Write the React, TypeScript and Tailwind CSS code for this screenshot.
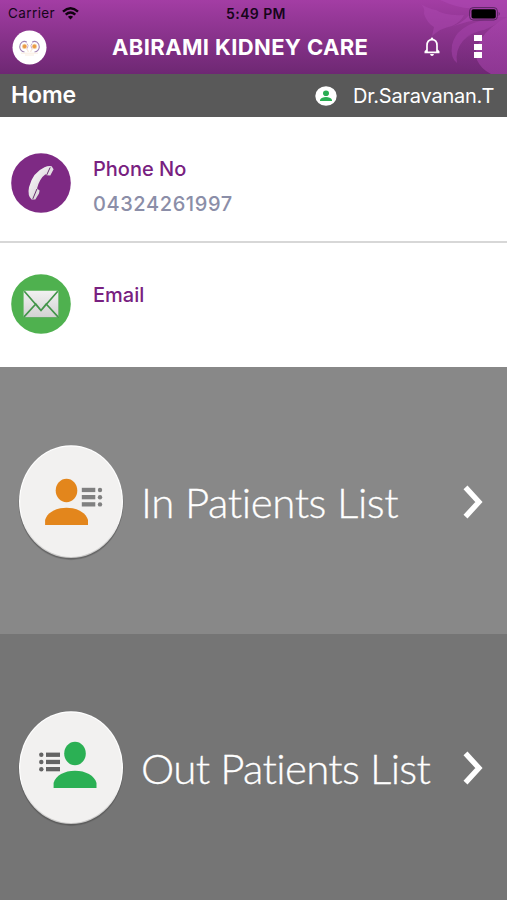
import React from "react";

function StatusBar() {
  return (
    <div className="grid h-[27px] grid-cols-3 items-center px-2 text-[#16051a]">
      <div className="flex items-center gap-[7px]">
        <span className="text-[13.5px] leading-none tracking-[0.4px]">Carrier</span>
        <svg width="17" height="13" viewBox="0 0 17 13" fill="none" stroke="#10020f" strokeWidth="2.4">
          <path d="M1 4.7Q8.5 -2 16 4.7" />
          <path d="M3.7 7.6Q8.5 3.5 13.3 7.6" />
          <path d="M5.9 9.8Q8.5 7.5 11.1 9.8L8.5 12.4Z" fill="#10020f" stroke="none" />
        </svg>
      </div>
      <div className="pl-[5px] text-center text-[14px] leading-none font-semibold tracking-[0.4px] whitespace-nowrap">5:49 PM</div>
      <div className="flex justify-end">
        <svg width="32" height="14" viewBox="0 0 32 14" className="mr-[-2px]">
          <rect x="0.6" y="0.6" width="27.8" height="12.4" rx="3.5" fill="none" stroke="#5b2563" strokeWidth="1" />
          <rect x="2.5" y="2.3" width="24.3" height="9.2" rx="1.8" fill="#000" />
          <path d="M29.7 4.7q2 2 0 4.2Z" fill="#5b2563" />
        </svg>
      </div>
    </div>
  );
}

function HeaderArt() {
  return (
    <svg className="absolute top-0 right-0" width="107" height="74" viewBox="400 0 107 74">
      <defs>
        <linearGradient id="plume" x1="0" y1="0" x2="0" y2="1">
          <stop offset="0" stopColor="#b34bb8" stopOpacity="0.5" />
          <stop offset="1" stopColor="#a341a8" stopOpacity="0.6" />
        </linearGradient>
        <linearGradient id="shade" x1="0" y1="0" x2="0" y2="1">
          <stop offset="0" stopColor="#8d3491" />
          <stop offset="1" stopColor="#6f2875" />
        </linearGradient>
      </defs>
      <path d="M421 4Q425 8 424 14Q427 23 434 27L432 36Q441 28 452 26Q461 22 464 15Q445 16 436 10Q427 8 421 4Z" fill="#ab47b0" opacity="0.5" />
      <path d="M440 0Q462 10 474 8Q468 20 452 27Q469 19 507 17V0Z" fill="#b04ab6" opacity="0.5" />
      <path d="M484 20Q456 26 452 45Q450 58 457 63Q455 50 463 41Q472 32 484 30Q494 26 507 17Q494 17 484 20Z" fill="#a744ad" opacity="0.5" />
      <path d="M507 17Q489 27 482 38Q473 50 477 60Q481 69 491 74H507Z" fill="url(#plume)" />
      <path d="M488 30Q475 37 473 51Q474 64 487 74Q464 70 458 63Q456 44 469 35Q478 30 488 30Z" fill="url(#shade)" opacity="0.4" />
    </svg>
  );
}

function KidneyLogo() {
  return (
    <svg width="35" height="35" viewBox="0 0 35 35">
      <circle cx="17.5" cy="17.5" r="17" fill="#fff" />
      <g fill="none" stroke="#a184b4" strokeWidth="1.1">
        <path d="M14.8 12.2Q12.5 10.6 10 12.1Q7.6 14 7.7 17Q8.2 21.4 12.5 22" />
        <path d="M20.2 12.2Q22.5 10.6 25 12.1Q27.4 14 27.3 17Q26.8 21.4 22.5 22" />
      </g>
      <circle cx="12.5" cy="16.4" r="2.6" fill="#f8d6ac" />
      <circle cx="22.5" cy="16.4" r="2.6" fill="#f8d6ac" />
      <circle cx="12.6" cy="16.4" r="1.8" fill="#e99c46" />
      <circle cx="22.4" cy="16.4" r="1.8" fill="#e99c46" />
      <path d="M15 13.5Q17 15 15.3 18.5M20 13.5Q18 15 19.7 18.5" fill="none" stroke="#c5a6c6" strokeWidth=".9" />
      <path d="M13.5 18.5Q16.2 19 16.3 22M21.5 18.5Q18.8 19 18.7 22" fill="none" stroke="#f6dcc6" strokeWidth=".8" />
      <path d="M9 23.2H26M13 25H22" stroke="#f9ecdf" strokeWidth="1" />
    </svg>
  );
}

function PhoneIcon() {
  return (
    <svg width="60" height="60" viewBox="0 0 60 60" className="shrink-0">
      <defs>
        <linearGradient id="handset" x1="0" y1="0" x2="1" y2="1">
          <stop stopColor="#fff" />
          <stop offset="1" stopColor="#c9c2ca" />
        </linearGradient>
      </defs>
      <circle cx="30" cy="30" r="29.8" fill="#7e2a84" />
      <path d="M33.5 14.2Q37.5 12.4 40.6 13.2L42.6 16.2L39.3 22.6L35.6 22.3L34.5 21.3Q28.5 25.5 26 35.6L28.6 37.4L28 40.6L24.3 46.5L20.6 46.6Q16.3 42.5 18 34.2Q21.5 19.5 33.5 14.2Z" fill="url(#handset)" />
      <path d="M39.2 14.4L35.6 22.2M25.9 36L21.8 45.9" stroke="#67316d" strokeWidth="1" />
    </svg>
  );
}

function MailIcon() {
  return (
    <svg width="60" height="60" viewBox="0 0 60 60" className="shrink-0">
      <defs>
        <linearGradient id="paper" x1="0" y1="0" x2="0" y2="1">
          <stop stopColor="#f1f1f1" />
          <stop offset="1" stopColor="#d2d2d2" />
        </linearGradient>
      </defs>
      <circle cx="30" cy="30" r="29.8" fill="#4fb14f" />
      <rect x="13" y="17.5" width="35" height="26.6" rx="1" fill="#338b38" opacity=".45" />
      <rect x="12.6" y="16.8" width="34.8" height="26.4" rx="1" fill="url(#paper)" />
      <path d="M13.3 17.2L24.8 30.5L30 36.5L35.2 30.5L46.8 17.2M13 42.8L24.8 30L30 36.5L35.2 30L47 42.8" fill="none" stroke="#43954a" strokeWidth="1.7" />
    </svg>
  );
}

function PatientBadge({ outgoing = false }: { outgoing?: boolean }) {
  const color = outgoing ? "#2bb054" : "#e3861c";
  const headX = outgoing ? 57 : 48.5;
  const lineX = outgoing ? 28 : 63.8;
  const dotX = outgoing ? 23.3 : 82;
  const lineY = outgoing ? 42.6 : 40.8;
  const gray = outgoing ? "#636363" : "#808080";
  const id = outgoing ? "out" : "in";
  const top = outgoing ? 0 : 3;
  return (
    <svg width="106" height="118" viewBox="0 0 106 118" className="shrink-0">
      <defs>
        <linearGradient id={id} x1="0" y1="0" x2="0" y2="1">
          <stop offset="0.6" stopColor="#fff" />
          <stop offset="1" stopColor="#c6c5c4" />
        </linearGradient>
      </defs>
      <ellipse cx="53" cy="59.3" rx="52.5" ry="56.9" fill="#505050" opacity=".25" />
      <ellipse cx="53" cy="58.7" rx="52.2" ry="56.7" fill="#4c4c4c" opacity=".45" />
      <ellipse cx="53" cy="57.7" rx="52" ry="56.4" fill={`url(#${id})`} />
      <ellipse cx="53" cy="57.7" rx="50.8" ry="55.3" fill="#f2f1f0" />
      <g transform={`translate(0 ${top})`}>
        <ellipse cx={headX} cy="43.5" rx="10.8" ry="11.7" fill={color} />
        <path transform={`translate(${headX - 48.5} 0)`} d="M27.1 78V73C29 65.5 38 60.8 48.5 60.8S68 65.5 70 73V78Z" fill={color} />
        {[0, 1, 2].map((row) => (
          <g key={row} fill={gray}>
            <rect x={lineX} y={lineY + row * 7.2} width={outgoing ? 14 : 13.5} height="4.3" />
            <circle cx={dotX} cy={lineY + 2.2 + row * 7.2} r="2.2" />
          </g>
        ))}
      </g>
    </svg>
  );
}

function ListRow({ outgoing = false }: { outgoing?: boolean }) {
  return (
    <button className={outgoing ? "flex h-[266px] w-full items-center bg-[#757575] pt-[4px] pl-[18px] text-left" : "flex h-[267px] w-full items-center bg-[#888] pt-[4px] pl-[18px] text-left"}>
      <PatientBadge outgoing={outgoing} />
      <span className={outgoing ? "ml-[17px] w-[320px] pb-[3px] font-['Lato',sans-serif] text-[42px] leading-none font-light tracking-[-0.65px] whitespace-nowrap text-white [-webkit-text-stroke:0.3px_white]" : "ml-[17px] w-[320px] pb-[1px] font-['Lato',sans-serif] text-[42px] leading-none font-light tracking-[-0.4px] whitespace-nowrap text-white [-webkit-text-stroke:0.3px_white]"}>
        {outgoing ? "Out Patients List" : "In Patients List"}
      </span>
      <svg width="23" height="36" viewBox="0 0 23 36" className="mb-[2px] shrink-0">
        <path d="M4.5 3.4L17.9 18L4.5 32.6" fill="none" stroke="#fff" strokeWidth="5.4" />
      </svg>
    </button>
  );
}

export default function App() {
  return (
    <main className="flex h-[900px] w-[507px] flex-col overflow-hidden bg-white font-['Inter','Liberation_Sans',sans-serif]">
      <header className="relative h-[74px] shrink-0 bg-linear-to-b from-[#a33da4] to-[#6e2873]">
        <HeaderArt />
        <div className="relative">
          <StatusBar />
          <div className="flex h-[40px] items-center pl-[12px]">
            <KidneyLogo />
            <h1 className="ml-[65px] w-[258px] text-[22px] leading-none font-bold tracking-[0.38px] whitespace-nowrap text-white">ABIRAMI KIDNEY CARE</h1>
            <svg width="18" height="21" viewBox="0 0 18 21" className="mt-[-2px] ml-[53px]" fill="none" stroke="#fff" strokeWidth="1.7">
              <path d="M4 15.6V9.5C4 5.8 5.8 3.6 9 3.6S14 5.8 14 9.5V15.6M1.5 16.4H16.5M2 16L4 13.8M16 16L14 13.8" />
              <circle cx="9" cy="2.6" r="1.2" fill="#fff" stroke="none" />
              <path d="M7 18H11Q10.5 20 9 20T7 18Z" fill="#fff" stroke="none" />
            </svg>
            <div className="mt-[-1px] ml-[33px] grid gap-[2.5px]">
              <i className="h-[6px] w-[8px] bg-white" />
              <i className="h-[6px] w-[8px] bg-white" />
              <i className="h-[6px] w-[8px] bg-white" />
            </div>
          </div>
        </div>
      </header>
      <section className="flex h-[43px] shrink-0 items-center bg-[#595959] pl-[11px] text-white">
        <h2 className="w-[304px] text-[23px] leading-none font-semibold tracking-[-0.1px]">Home</h2>
        <svg width="22" height="20" viewBox="0 0 22 20">
          <ellipse cx="11" cy="10" rx="10.7" ry="9.8" fill="#fff" />
          <ellipse cx="11" cy="7.2" rx="3" ry="2.8" fill="#2aae53" />
          <path d="M5 15V13.8C6 11.8 8.3 11 11 11S16 11.8 17 13.8V15Z" fill="#2aae53" />
        </svg>
        <span className="ml-[16px] text-[20px] leading-none tracking-[-0.22px] whitespace-nowrap">Dr.Saravanan.T</span>
      </section>
      <section className="flex h-[126px] shrink-0 items-start border-b-2 border-[#d7d7d7] pt-[36px] pl-[11px]">
        <PhoneIcon />
        <div className="pt-[4px] pl-[22px] font-medium">
          <h3 className="text-[20px] leading-[24px] text-[#782080]">Phone No</h3>
          <p className="mt-[11px] text-[20px] leading-[24px] tracking-[0.6px] text-[#8b8ea8]">04324261997</p>
        </div>
      </section>
      <section className="flex h-[124px] shrink-0 items-start pt-[31px] pl-[11px]">
        <MailIcon />
        <h3 className="pt-[9px] pl-[22px] text-[20px] leading-[24px] font-medium text-[#782080]">Email</h3>
      </section>
      <ListRow />
      <ListRow outgoing />
    </main>
  );
}
